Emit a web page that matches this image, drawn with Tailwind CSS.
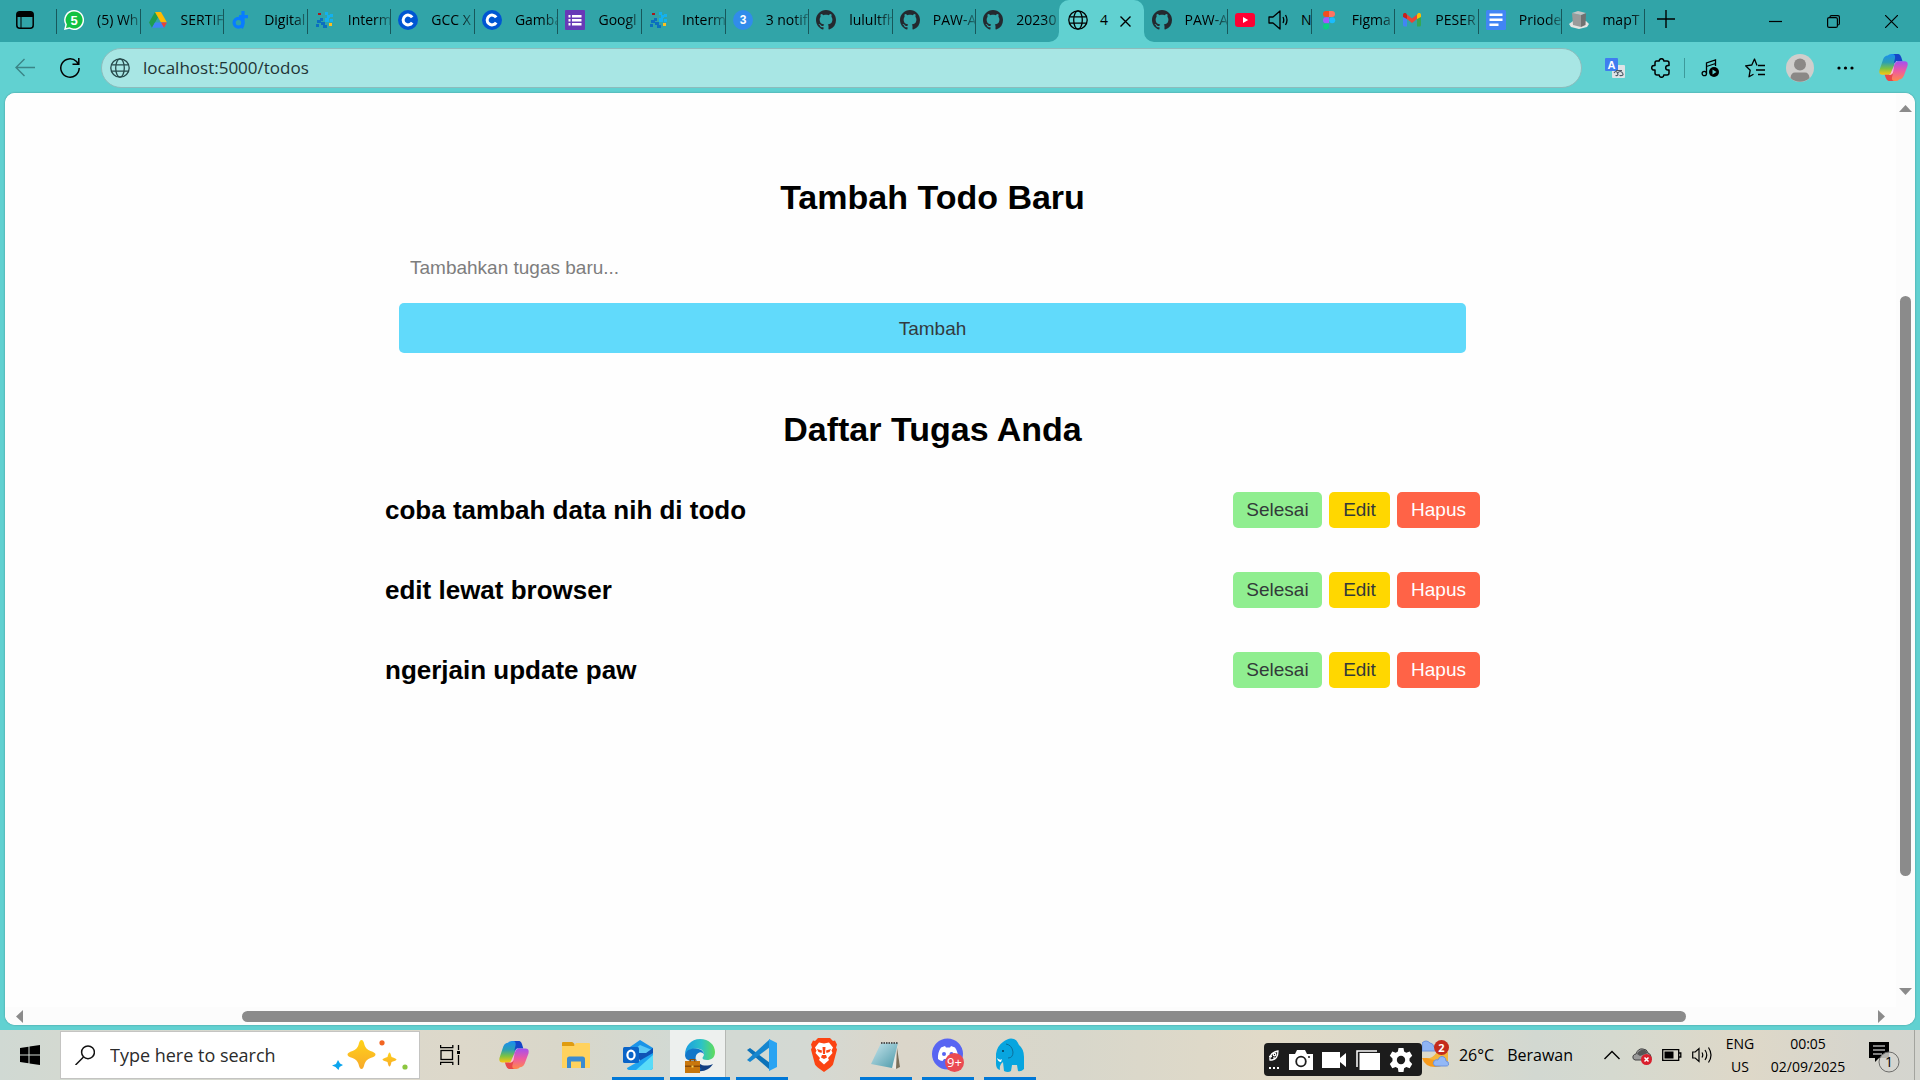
<!DOCTYPE html>
<html lang="id">
<head>
<meta charset="utf-8">
<meta name="viewport" content="width=device-width, initial-scale=1">
<title>Todos</title>
<script src="https://cdn.jsdelivr.net/npm/@tailwindcss/browser@4"></script>
</head>
<body class="flex h-screen flex-col overflow-hidden bg-[#61d1d1] font-['Open_Sans',sans-serif] text-black">

<!-- shared icons -->
<svg class="absolute size-0" aria-hidden="true">
  <defs>
    <linearGradient id="cpA" x1="0" y1="0" x2="0" y2="1"><stop offset="0" stop-color="#1b8df0"/><stop offset=".4" stop-color="#2a9fb5"/><stop offset=".7" stop-color="#7cc243"/><stop offset="1" stop-color="#ffc50f"/></linearGradient>
    <linearGradient id="cpB" x1="0" y1="0" x2="0" y2="1"><stop offset="0" stop-color="#a44ff0"/><stop offset=".5" stop-color="#ee5aa0"/><stop offset="1" stop-color="#ff8a4a"/></linearGradient>
    <linearGradient id="edA" x1="0" y1="0" x2="1" y2="0"><stop offset="0" stop-color="#1b9de2"/><stop offset=".55" stop-color="#2cc3c6"/><stop offset="1" stop-color="#5fdc5a"/></linearGradient>
    <linearGradient id="star" x1="0" y1="0" x2="0" y2="1"><stop offset="0" stop-color="#ffd319"/><stop offset="1" stop-color="#f8a92a"/></linearGradient>
    <linearGradient id="note" x1="0" y1="0" x2="1" y2="1"><stop offset="0" stop-color="#c9e7ee"/><stop offset="1" stop-color="#4b98a8"/></linearGradient>
  </defs>
  <symbol id="github" viewBox="0 0 16 16"><path fill="#24292f" d="M8 0C3.58 0 0 3.58 0 8c0 3.54 2.29 6.53 5.47 7.59.4.07.55-.17.55-.38 0-.19-.01-.82-.01-1.49-2.01.37-2.53-.49-2.69-.94-.09-.23-.48-.94-.82-1.13-.28-.15-.68-.52-.01-.53.63-.01 1.08.58 1.23.82.72 1.21 1.87.87 2.33.66.07-.52.28-.87.51-1.07-1.78-.2-3.64-.89-3.64-3.95 0-.87.31-1.59.82-2.15-.08-.2-.36-1.02.08-2.12 0 0 .67-.21 2.2.82.64-.18 1.32-.27 2-.27s1.36.09 2 .27c1.53-1.04 2.2-.82 2.2-.82.44 1.1.16 1.92.08 2.12.51.56.82 1.27.82 2.15 0 3.07-1.87 3.75-3.65 3.95.29.25.54.73.54 1.48 0 1.07-.01 1.93-.01 2.2 0 .21.15.46.55.38A8.01 8.01 0 0 0 16 8c0-4.42-3.58-8-8-8z"/></symbol>
  <symbol id="coursera" viewBox="0 0 20 20"><circle cx="10" cy="10" r="10" fill="#0056d2"/><path fill="none" stroke="#fff" stroke-width="3" d="M14.2 12.6A4.9 4.9 0 1 1 14.2 7.4"/></symbol>
  <symbol id="dots" viewBox="0 0 20 20"><path fill="#0b6fc0" d="M2 10h4v3H2zM6 12h4v3H6zM1 14h3v3H1zM8 15h4v3H8zM5 8h3v3H5z"/><path fill="#13b1f0" d="M10 2h3v3h-3zM12 5h3v3h-3zM15 4h3v3h-3zM10 8h4v4h-4zM15 9h3v3h-3z"/><path fill="#a9191c" d="M3 3h3v2H3z"/><path fill="#ffc01e" d="M14 13h3v3h-3z"/></symbol>
  <symbol id="globe" viewBox="0 0 20 20"><g fill="none" stroke="currentColor" stroke-width="1.3"><circle cx="10" cy="10" r="9.2"/><ellipse cx="10" cy="10" rx="4.3" ry="9.2"/><path d="M1.6 6.800h16.800M1.600 13.200h16.800"/></g></symbol>
  <symbol id="copilot" viewBox="0 0 28 28"><path fill="url(#cpA)" d="M8.500 2.500Q9.500 1 12 1h7.500L13 19.500Q12.500 21 10.500 21H3.200Q-.5 21 .5 16.500L4 6Q5.500 2.500 8.500 2.500z"/><path fill="#1546c8" d="M13 1h5.500Q20.500 1 21.500 4l1.200 4h-4.200Q15 8 14 11l1.500-6Q16 1 13 1z"/><path fill="url(#cpB)" d="M19.500 25.500Q18.500 27 16 27H8.500L15 10.500Q15.800 8 18 8h6.800q3.700 0 2.700 4.500L24 22q-1.500 3.500-4.500 3.500z"/><path fill="#e8474a" d="M15 27H9.500Q7.500 27 6.500 24l-1-3h4.500Q13 21 14 18l-1.500 5.500Q12 27 15 27z"/><path fill="#fff" fill-opacity=".6" d="M15 10 18 8h-1.500l-5.500 12-1.500 1h2q1.500-.5 2-2z"/></symbol>
</svg>

<!-- tab strip -->
<header class="flex h-[42px] shrink-0 items-stretch bg-[#31a4a8] text-sm leading-5">
  <button aria-label="Tab actions" class="flex w-14 shrink-0 items-center pl-4 pb-[2px]">
    <svg class="size-[18px]" viewBox="0 0 18 18"><rect x=".8" y=".8" width="16.400" height="16.400" rx="3" fill="none" stroke="#000" stroke-width="1.5"/><path d="M1 6V4a3 3 0 0 1 3-3h10a3 3 0 0 1 3 3v2z"/><path stroke="#000" stroke-width="1" d="M5 5v12"/></svg>
  </button>
  <nav class="flex w-[1589px] min-w-0" aria-label="Tabs">
    <a href="#" class="relative flex min-w-0 flex-1 items-center gap-[13px] pb-[2px] pl-2 before:absolute before:left-0 before:top-[9px] before:h-[25px] before:w-px before:bg-[#17585b]">
      <svg class="size-5 shrink-0" viewBox="0 0 20 20"><path fill="#fff" d="M10 0a10 10 0 1 1-4.700 18.800L0 20l1.300-5.200A10 10 0 0 1 10 0z"/><path fill="#12c143" d="M10 1.500a8.500 8.500 0 1 1-4.400 15.700L2 18l.9-3.500A8.500 8.500 0 0 1 10 1.500z"/><text x="10" y="14.800" text-anchor="middle" font-size="13" font-weight="700" fill="#fff" font-family="Liberation Sans">5</text></svg>
      <span class="min-w-0 flex-1 overflow-hidden whitespace-nowrap [mask-image:linear-gradient(to_right,#000_65%,#0004)]">(5) Wh</span></a>
    <a href="#" class="relative flex min-w-0 flex-1 items-center gap-[13px] pb-[2px] pl-2 before:absolute before:left-0 before:top-[9px] before:h-[25px] before:w-px before:bg-[#17585b]">
      <svg class="size-5 shrink-0" viewBox="0 0 20 20"><path fill="#1e9c50" d="M7 2L1 12.500l3 5.300L10 7.300z"/><path fill="#ffba00" d="M7 2h6l6 10.500h-6z"/><path fill="#3f85f4" d="M4 17.800h12l3-5.300H7z"/><path fill="#ea4335" d="M13 12.500h6l-3 5.300z"/></svg>
      <span class="min-w-0 flex-1 overflow-hidden whitespace-nowrap [mask-image:linear-gradient(to_right,#000_65%,#0004)]">SERTIF</span></a>
    <a href="#" class="relative flex min-w-0 flex-1 items-center gap-[13px] pb-[2px] pl-2 before:absolute before:left-0 before:top-[9px] before:h-[25px] before:w-px before:bg-[#17585b]">
      <svg class="size-5 shrink-0" viewBox="0 0 20 20"><g fill="none" stroke="#087cff" stroke-width="3.200"><circle cx="7.500" cy="12.700" r="4.400"/><path d="M12 1v12q0 3-1.500 5M8 6.600h9"/></g></svg>
      <span class="min-w-0 flex-1 overflow-hidden whitespace-nowrap [mask-image:linear-gradient(to_right,#000_65%,#0004)]">Digital</span></a>
    <a href="#" class="relative flex min-w-0 flex-1 items-center gap-[13px] pb-[2px] pl-2 before:absolute before:left-0 before:top-[9px] before:h-[25px] before:w-px before:bg-[#17585b]">
      <svg class="size-5 shrink-0"><use href="#dots"/></svg>
      <span class="min-w-0 flex-1 overflow-hidden whitespace-nowrap [mask-image:linear-gradient(to_right,#000_65%,#0004)]">Interm</span></a>
    <a href="#" class="relative flex min-w-0 flex-1 items-center gap-[13px] pb-[2px] pl-2 before:absolute before:left-0 before:top-[9px] before:h-[25px] before:w-px before:bg-[#17585b]">
      <svg class="size-5 shrink-0"><use href="#coursera"/></svg>
      <span class="min-w-0 flex-1 overflow-hidden whitespace-nowrap [mask-image:linear-gradient(to_right,#000_65%,#0004)]">GCC X</span></a>
    <a href="#" class="relative flex min-w-0 flex-1 items-center gap-[13px] pb-[2px] pl-2 before:absolute before:left-0 before:top-[9px] before:h-[25px] before:w-px before:bg-[#17585b]">
      <svg class="size-5 shrink-0"><use href="#coursera"/></svg>
      <span class="min-w-0 flex-1 overflow-hidden whitespace-nowrap [mask-image:linear-gradient(to_right,#000_65%,#0004)]">Gamba</span></a>
    <a href="#" class="relative flex min-w-0 flex-1 items-center gap-[13px] pb-[2px] pl-2 before:absolute before:left-0 before:top-[9px] before:h-[25px] before:w-px before:bg-[#17585b]">
      <svg class="size-5 shrink-0" viewBox="0 0 20 20"><rect width="20" height="20" rx="1" fill="#673ab7"/><path fill="#fff" d="M3.500 5h2v2.500h-2zM7 5h9.500v2.500H7zM3.500 9h2v2.500h-2zM7 9h9.500v2.500H7zM3.500 13h2v2.500h-2zM7 13h9.500v2.500H7z"/></svg>
      <span class="min-w-0 flex-1 overflow-hidden whitespace-nowrap [mask-image:linear-gradient(to_right,#000_65%,#0004)]">Googl</span></a>
    <a href="#" class="relative flex min-w-0 flex-1 items-center gap-[13px] pb-[2px] pl-2 before:absolute before:left-0 before:top-[9px] before:h-[25px] before:w-px before:bg-[#17585b]">
      <svg class="size-5 shrink-0"><use href="#dots"/></svg>
      <span class="min-w-0 flex-1 overflow-hidden whitespace-nowrap [mask-image:linear-gradient(to_right,#000_65%,#0004)]">Interm</span></a>
    <a href="#" class="relative flex min-w-0 flex-1 items-center gap-[13px] pb-[2px] pl-2 before:absolute before:left-0 before:top-[9px] before:h-[25px] before:w-px before:bg-[#17585b]">
      <svg class="size-5 shrink-0" viewBox="0 0 20 20"><circle cx="10" cy="10" r="10" fill="#318ceb"/><text x="10" y="14" text-anchor="middle" font-size="12" font-weight="700" fill="#fff" font-family="Liberation Sans">3</text></svg>
      <span class="min-w-0 flex-1 overflow-hidden whitespace-nowrap [mask-image:linear-gradient(to_right,#000_65%,#0004)]">3 notif</span></a>
    <a href="#" class="relative flex min-w-0 flex-1 items-center gap-[13px] pb-[2px] pl-2 before:absolute before:left-0 before:top-[9px] before:h-[25px] before:w-px before:bg-[#17585b]">
      <svg class="size-5 shrink-0"><use href="#github"/></svg>
      <span class="min-w-0 flex-1 overflow-hidden whitespace-nowrap [mask-image:linear-gradient(to_right,#000_65%,#0004)]">lulultfh</span></a>
    <a href="#" class="relative flex min-w-0 flex-1 items-center gap-[13px] pb-[2px] pl-2 before:absolute before:left-0 before:top-[9px] before:h-[25px] before:w-px before:bg-[#17585b]">
      <svg class="size-5 shrink-0"><use href="#github"/></svg>
      <span class="min-w-0 flex-1 overflow-hidden whitespace-nowrap [mask-image:linear-gradient(to_right,#000_65%,#0004)]">PAW-A</span></a>
    <a href="#" class="relative flex min-w-0 flex-1 items-center gap-[13px] pb-[2px] pl-2 before:absolute before:left-0 before:top-[9px] before:h-[25px] before:w-px before:bg-[#17585b]">
      <svg class="size-5 shrink-0"><use href="#github"/></svg>
      <span class="min-w-0 flex-1 overflow-hidden whitespace-nowrap [mask-image:linear-gradient(to_right,#000_65%,#0004)]">20230</span></a>
    <a href="#" aria-current="page" class="relative flex min-w-0 flex-1 items-center rounded-t-[10px] bg-[#61d1d1] pb-[2px] pl-[9px]">
      <svg class="absolute -left-2.5 bottom-0 size-2.5" viewBox="0 0 10 10"><path fill="#61d1d1" d="M10 0v10H0A10 10 0 0 0 10 0z"/></svg>
      <svg class="absolute -right-2.5 bottom-0 size-2.5" viewBox="0 0 10 10"><path fill="#61d1d1" d="M0 0v10h10A10 10 0 0 1 0 0z"/></svg>
      <svg class="size-5 shrink-0"><use href="#globe"/></svg>
      <span class="ml-3">4</span>
      <svg class="ml-3 mt-[2px] size-[11px]" viewBox="0 0 11 11"><path stroke="#000" stroke-width="1.400" d="M.5.500l10 10M10.500.500l-10 10"/></svg></a>
    <a href="#" class="relative flex min-w-0 flex-1 items-center gap-[13px] pb-[2px] pl-2">
      <svg class="size-5 shrink-0"><use href="#github"/></svg>
      <span class="min-w-0 flex-1 overflow-hidden whitespace-nowrap [mask-image:linear-gradient(to_right,#000_65%,#0004)]">PAW-A</span></a>
    <a href="#" class="relative flex min-w-0 flex-1 items-center gap-[13px] pb-[2px] pl-2 before:absolute before:left-0 before:top-[9px] before:h-[25px] before:w-px before:bg-[#17585b]">
      <svg class="size-5 shrink-0" viewBox="0 0 20 20"><rect y="3" width="20" height="14" rx="3" fill="#ff0033"/><path fill="#fff" d="M8 7v6l5.200-3z"/></svg>
      <svg class="size-5 shrink-0" viewBox="0 0 20 20"><path fill="none" stroke="#000" stroke-width="1.300" stroke-linejoin="round" d="M1 7v6h4l7 6V1L5 7zM15 7q1.500 3 0 6M17.500 5q3 5 0 10"/></svg>
      <span class="min-w-0 flex-1 whitespace-nowrap">N</span></a>
    <a href="#" class="relative flex min-w-0 flex-1 items-center gap-[13px] pb-[2px] pl-2 before:absolute before:left-0 before:top-[9px] before:h-[25px] before:w-px before:bg-[#17585b]">
      <svg class="size-5 shrink-0" viewBox="0 0 20 20"><path fill="#f24e1e" d="M10 1v6H7a3 3 0 0 1 0-6z"/><path fill="#ff7262" d="M10 1h3a3 3 0 0 1 0 6h-3z"/><path fill="#a259ff" d="M10 7.200v6H7a3 3 0 0 1 0-6z"/><circle cx="13.200" cy="10.200" r="3" fill="#1abcfe"/><path fill="#0acf83" d="M7 13.400h3v3a3 3 0 1 1-3-3z"/></svg>
      <span class="min-w-0 flex-1 overflow-hidden whitespace-nowrap [mask-image:linear-gradient(to_right,#000_65%,#0004)]">Figma</span></a>
    <a href="#" class="relative flex min-w-0 flex-1 items-center gap-[13px] pb-[2px] pl-2 before:absolute before:left-0 before:top-[9px] before:h-[25px] before:w-px before:bg-[#17585b]">
      <svg class="size-5 shrink-0" viewBox="0 0 20 20"><path fill="#4285f4" d="M1 6l4 3v7.500H2.500A1.500 1.500 0 0 1 1 15z"/><path fill="#34a853" d="M19 6l-4 3v7.500h2.500A1.500 1.500 0 0 0 19 15z"/><path fill="#ea4335" d="M5 9V4.500l5 4 5-4V9l-5 4z"/><path fill="#c5221f" d="M1 7V5c0-2 2-2.500 3.200-1.500L5 4.500V9z"/><path fill="#fbbc04" d="M19 7V5c0-2-2-2.500-3.200-1.500l-.8 1V9z"/></svg>
      <span class="min-w-0 flex-1 overflow-hidden whitespace-nowrap [mask-image:linear-gradient(to_right,#000_65%,#0004)]">PESER</span></a>
    <a href="#" class="relative flex min-w-0 flex-1 items-center gap-[13px] pb-[2px] pl-2 before:absolute before:left-0 before:top-[9px] before:h-[25px] before:w-px before:bg-[#17585b]">
      <svg class="size-5 shrink-0" viewBox="0 0 20 20"><rect width="20" height="20" rx="1.500" fill="#4285f4"/><path fill="#fff" d="M3.500 3.500h13V6h-13zM3.500 8.500h13V11h-13zM3.500 13.500h9V16h-9z"/></svg>
      <span class="min-w-0 flex-1 overflow-hidden whitespace-nowrap [mask-image:linear-gradient(to_right,#000_65%,#0004)]">Priode</span></a>
    <a href="#" class="relative flex min-w-0 flex-1 items-center gap-[13px] pb-[2px] pl-2 before:absolute before:left-0 before:top-[9px] before:h-[25px] before:w-px before:bg-[#17585b] after:absolute after:right-0 after:top-[9px] after:h-[25px] after:w-px after:bg-[#17585b]">
      <svg class="size-5 shrink-0" viewBox="0 0 20 20"><path fill="#e4e4e2" d="M0 14l4-3h13l3 3-2 3-8 2-8-2z"/><path fill="#9b9b9b" d="M3 3l9 2v12l-8-2z"/><path fill="#717171" d="M12 5l5-2-.5 12-4.500 2z"/><path fill="#c5c5c5" d="M3 3l6-2 8 2-5 2z"/></svg>
      <span class="min-w-0 flex-1 overflow-hidden whitespace-nowrap [mask-image:linear-gradient(to_right,#000_65%,#0004)]">mapT</span></a>
  </nav>
  <button aria-label="New tab" class="flex w-[42px] shrink-0 items-center justify-center pb-1"><svg class="size-[18px]" viewBox="0 0 18 18"><path stroke="#000" stroke-width="1.400" d="M9 0v18M0 9h18"/></svg></button>
  <div class="ml-auto flex shrink-0">
    <button aria-label="Minimize" class="flex w-[58px] items-center justify-center"><svg class="size-[13px]" viewBox="0 0 13 13"><path stroke="#000" stroke-width="1.200" d="M0 6.500h13"/></svg></button>
    <button aria-label="Restore" class="flex w-[58px] items-center justify-center"><svg class="size-[13px]" viewBox="0 0 13 13"><g fill="none" stroke="#000" stroke-width="1.200"><rect x=".6" y="2.600" width="9.800" height="9.800" rx="1.500"/><path d="M3 2.500V2Q3 .6 4.500.6H11q1.400 0 1.400 1.400v6.500q0 1.500-1.500 1.500"/></g></svg></button>
    <button aria-label="Close" class="flex w-[58px] items-center justify-center"><svg class="size-[13px]" viewBox="0 0 13 13"><path stroke="#000" stroke-width="1.200" d="M0 0l13 13M13 0L0 13"/></svg></button>
  </div>
</header>

<!-- toolbar -->
<div class="flex h-[51px] shrink-0 items-center pr-px">
  <button aria-label="Back" class="flex w-[50px] items-center justify-center"><svg class="size-5" viewBox="0 0 20 20"><path fill="none" stroke="#3b8587" stroke-width="1.400" d="M20 9.500H1M9.500 1L1 9.500 9.500 18"/></svg></button>
  <button aria-label="Refresh" class="flex w-[51px] items-center pl-[10px]"><svg class="size-5" viewBox="0 0 20 20"><path fill="none" stroke="#000" stroke-width="1.500" d="M19.200 10A9.200 9.200 0 1 1 16.500 3.500L18.500 6M18.800 0v6.300h-6.300"/></svg></button>
  <div class="flex h-10 min-w-0 flex-1 items-center rounded-full border border-[#8cbcbc] bg-[#a8e6e4] pl-2">
    <svg class="size-5 shrink-0 text-[#26494a]"><use href="#globe"/></svg>
    <input aria-label="Address" value="localhost:5000/todos" class="ml-[13px] min-w-0 flex-1 bg-transparent text-[17px] leading-6 text-[#1f3536] outline-none">
  </div>
  <div class="ml-[10px] flex shrink-0 items-center">
    <button aria-label="Translate" class="flex w-[45px] justify-center"><svg class="size-5" viewBox="0 0 20 20"><rect x="7" y="7" width="13" height="13" rx="1" fill="#dfe3e6"/><rect width="13" height="13" rx="1" fill="#3f7df0"/><text x="6.500" y="10.500" text-anchor="middle" font-size="11" font-weight="700" fill="#fff" font-family="Liberation Sans">A</text><path fill="none" stroke="#4d5a66" stroke-width="1.200" d="M9 15q2-3 3.500 0t-2 2.500M12.500 15q3-3 5 0t-3 2.500M11 12.500h6"/></svg></button>
    <button aria-label="Extensions" class="flex w-[47px] justify-center"><svg class="size-5" viewBox="0 0 20 20"><path fill="none" stroke="#000" stroke-width="1.500" stroke-linejoin="round" d="M5.500 3H8.200a2.300 2.300 0 0 1 4.600 0H16q2 0 2 2v2.500h-1a2.300 2.300 0 0 0 0 4.600h1V15q0 2-2 2h-3.200a2.300 2.300 0 0 1-4.600 0H6q-2 0-2-2v-2.900H3a2.300 2.300 0 0 1 0-4.600h1V5q0-2 1.500-2z"/></svg></button>
    <span class="h-5 w-px bg-[#3d9a9b]"></span>
    <button aria-label="Media" class="flex w-[50px] justify-center"><svg class="size-[18px]" viewBox="0 0 18 18"><g fill="none" stroke="#000" stroke-width="1.300"><circle cx="3.300" cy="14.500" r="2.200"/><path d="M5.500 14.500V4l9-3v6M5.500 7.500l9-3"/></g><circle cx="13" cy="13" r="5"/><path fill="#61d1d1" d="M11.500 10.500v5l4-2.500z"/></svg></button>
    <button aria-label="Favorites" class="flex w-10 justify-center"><svg class="size-5" viewBox="0 0 20 20"><g fill="none" stroke="#000" stroke-width="1.300"><path stroke-linejoin="round" d="M12 7.500L9.500 1 6.800 7 .6 7.800l4.600 4.400L4 18.800l4.500-2.600"/><path d="M13 7.500h7M11 12h9M13 16.500h7"/></g></svg></button>
    <button aria-label="Profile" class="flex w-[50px] justify-center"><svg class="size-7" viewBox="0 0 28 28"><circle cx="14" cy="14" r="14" fill="#d0cecc"/><circle cx="14" cy="10.500" r="6" fill="#8b8886"/><path fill="#8b8886" d="M4.500 24Q5 18.500 9 18.500h10q4 0 4.500 5.500a14 14 0 0 1-19 0z"/></svg></button>
    <button aria-label="More" class="flex w-10 justify-center"><svg class="h-1 w-[17px]" viewBox="0 0 17 4"><circle cx="2" cy="2" r="1.600"/><circle cx="8.500" cy="2" r="1.600"/><circle cx="15" cy="2" r="1.600"/></svg></button>
    <button aria-label="Copilot" class="flex w-[54px] justify-center pl-[2px]"><svg class="size-[29px]"><use href="#copilot"/></svg></button>
  </div>
</div>

<!-- page -->
<div class="mx-[5px] mb-[5px] flex min-h-0 flex-1 flex-col overflow-hidden rounded-[10px] bg-white shadow-[0_0_2px_#00000055]">
  <div class="flex min-h-0 flex-1">
    <main class="min-w-0 flex-1 overflow-hidden bg-[#fefefe] pr-9 pt-[84px] font-['Liberation_Sans',Arial,sans-serif] text-[19px]">
      <div class="mx-auto w-full max-w-[1095px]">
        <h2 class="text-center text-[34px] font-bold leading-10">Tambah Todo Baru</h2>
        <form class="mx-[14px] mt-[26px] flex flex-col gap-[10px]">
          <input type="text" aria-label="Tugas baru" placeholder="Tambahkan tugas baru..." class="h-[50px] bg-transparent px-[11px] outline-none placeholder:text-[#7d7d7d]">
          <button type="button" class="h-[50px] rounded-[5px] bg-[#61dafb] pt-[2px] text-[#333a40]">Tambah</button>
        </form>
        <h2 class="mt-14 text-center text-[34px] font-bold leading-10">Daftar Tugas Anda</h2>
        <ul class="mt-[21px]">
          <li class="flex h-20 items-center justify-between"><strong class="text-[26px] font-bold leading-8">coba tambah data nih di todo</strong>
            <span class="flex gap-[7px] leading-9"><button class="w-[89px] rounded-[5px] bg-[#90ee90] text-[#333a3a]">Selesai</button><button class="w-[61px] rounded-[5px] bg-[gold] text-[#333a3a]">Edit</button><button class="w-[83px] rounded-[5px] bg-[tomato] text-white">Hapus</button></span></li>
          <li class="flex h-20 items-center justify-between"><strong class="text-[26px] font-bold leading-8">edit lewat browser</strong>
            <span class="flex gap-[7px] leading-9"><button class="w-[89px] rounded-[5px] bg-[#90ee90] text-[#333a3a]">Selesai</button><button class="w-[61px] rounded-[5px] bg-[gold] text-[#333a3a]">Edit</button><button class="w-[83px] rounded-[5px] bg-[tomato] text-white">Hapus</button></span></li>
          <li class="flex h-20 items-center justify-between"><strong class="text-[26px] font-bold leading-8">ngerjain update paw</strong>
            <span class="flex gap-[7px] leading-9"><button class="w-[89px] rounded-[5px] bg-[#90ee90] text-[#333a3a]">Selesai</button><button class="w-[61px] rounded-[5px] bg-[gold] text-[#333a3a]">Edit</button><button class="w-[83px] rounded-[5px] bg-[tomato] text-white">Hapus</button></span></li>
        </ul>
      </div>
    </main>
    <div class="flex w-[19px] shrink-0 flex-col items-center bg-[#fcfcfc] py-3">
      <svg class="h-[7px] w-[13px] shrink-0" viewBox="0 0 13 7"><path fill="#8b8b8b" d="M0 7l6.500-7L13 7z"/></svg>
      <div class="min-h-0 flex-[184]"></div>
      <div class="min-h-0 w-[11px] flex-[580] rounded-full bg-[#8b8b8b]"></div>
      <div class="min-h-0 flex-[112]"></div>
      <svg class="h-[7px] w-[13px] shrink-0" viewBox="0 0 13 7"><path fill="#8b8b8b" d="M0 0l6.500 7L13 0z"/></svg>
    </div>
  </div>
  <div class="flex h-[18px] shrink-0 items-center bg-[#fcfcfc] pl-[11px] pr-[30px]">
    <svg class="h-[13px] w-[7px] shrink-0" viewBox="0 0 7 13"><path fill="#8b8b8b" d="M7 0L0 6.500 7 13z"/></svg>
    <div class="flex-[219]"></div>
    <div class="h-[11px] flex-[1444] rounded-full bg-[#8b8b8b]"></div>
    <div class="flex-[192]"></div>
    <svg class="h-[13px] w-[7px] shrink-0" viewBox="0 0 7 13"><path fill="#8b8b8b" d="M0 0l7 6.500L0 13z"/></svg>
  </div>
</div>

<!-- taskbar -->
<footer class="flex h-[50px] shrink-0 bg-[linear-gradient(to_right,#d0d9d3_0%,#d3d9d1_3%,#ddd8ca_24%,#d9d7ca_29%,#d2d9d3_35%,#d4d9d3_42%,#dbd6ca_47%,#d8d7cb_56%,#e1dac8_66%,#dcd9ca_74%,#d2d8d1_80%,#d5d9cf_84%,#ded8c8_91%,#d6d5cd_97%,#d4d5cf_100%)]">
  <button aria-label="Start" class="flex w-[60px] shrink-0 items-center justify-center"><svg class="size-5" viewBox="0 0 20 20"><path d="M0 3l8.500-1.200v7.700H0zM9.500 1.600L20 0v9.500H9.500zM0 10.500h8.500v7.700L0 17zM9.500 10.500H20V20L9.500 18.400z"/></svg></button>
  <label class="my-px flex w-[360px] shrink items-center border border-[#c4c4c2] bg-white pl-[14px] pr-[11px]">
    <svg class="size-5 shrink-0" viewBox="0 0 20 20"><g fill="none" stroke="#111" stroke-width="1.500"><circle cx="13" cy="7.300" r="6.400"/><path d="M8.500 12L.5 20"/></g></svg>
    <input aria-label="Search" placeholder="Type here to search" class="ml-[15px] min-w-0 flex-1 bg-transparent text-[18px] leading-6 outline-none placeholder:text-[#2b2b2b]">
    <svg class="h-[30px] w-[76px] shrink-0" viewBox="0 0 76 30"><path fill="url(#star)" d="M29.500 0q2 0 3 5 1.500 4.500 6 6 5 1.500 5 3.500t-5 3.500q-4.500 1.500-6 6-1 5-3 5t-3-5q-1.500-4.500-6-6-5-1.500-5-3.500t5-3.500q4.500-1.500 6-6 1-5 3-5z"/><path fill="url(#star)" d="M57.500 12.500q1 0 2 4.500 5 1.500 5 2.500t-5 2.500q-1 4.500-2 4.500t-2-4.500q-5-1.500-5-2.500t5-2.500q1-4.500 2-4.500z"/><path fill="#0ba5ee" d="M6 20l2 3.500 3 1.500-3.500 2L6.500 30l-3-3L0 25.500 4 24z"/><circle cx="50" cy="2.800" r="2.600" fill="#f26522"/><circle cx="73" cy="27" r="2.600" fill="#8cc63f"/></svg>
  </label>
  <button aria-label="Task view" class="flex w-[63px] shrink-0 items-center pl-5"><svg class="size-5" viewBox="0 0 20 20"><g fill="none" stroke="#000" stroke-width="1.300"><rect x="1" y="5.500" width="11.500" height="9"/><path d="M.6 0v2.700h12.200V0M.6 20v-2.700h12.200V20M18.500 0v5M18.500 10v10"/></g><path d="M17 6h3v3h-3z"/></svg></button>
  <nav class="flex shrink-0" aria-label="Apps">
    <button aria-label="Copilot" class="flex w-[62px] items-center justify-center"><svg class="size-[30px]"><use href="#copilot"/></svg></button>
    <button aria-label="File Explorer" class="flex w-[62px] items-center justify-center"><svg class="size-7" viewBox="0 0 28 28"><path fill="#e09c10" d="M0 2q0-1 1-1h9q1 0 2 1.500l1 2.500H0z"/><path fill="#ffd25e" d="M0 5h12l2-3h13q1 0 1 1v24H0z"/><path fill="#3b8bd0" d="M5 27V18q0-2.500 2.500-2.500h13Q23 15.500 23 18v9h-4v-6.500H9V27z"/></svg></button>
    <button aria-label="Outlook" class="relative flex w-[62px] items-center justify-center after:absolute after:inset-x-[5px] after:bottom-0 after:h-[3px] after:bg-[#0078d7]"><svg class="size-[30px]" viewBox="0 0 30 30"><path fill="#1a93e8" d="M4 9L17 0l13 8v10H4z"/><path fill="#5cc8f5" d="M8 12l9-7 12 5-10 12z"/><path fill="#0f52b5" d="M14 13h9l7-5v9l-12 7z"/><path fill="#1fa5f0" d="M4 28q0 2 3 2h20q3 0 3-3V13z"/><path fill="#59dbf8" d="M13 30h14q3 0 3-3V15z"/><rect y="7" width="16" height="16" rx="1.500" fill="#0a64c8"/><ellipse cx="8" cy="15" rx="3.600" ry="4.300" fill="none" stroke="#fff" stroke-width="2.200"/></svg></button>
    <button aria-label="Edge" class="relative flex w-[62px] items-center justify-center before:absolute before:inset-y-0 before:left-px before:w-14 before:border-r before:border-[#b5b8b4] before:bg-[#edf0ee] after:absolute after:bottom-0 after:left-px after:h-[3px] after:w-[60px] after:bg-[#0078d7]"><svg class="relative h-9 w-[30px]" viewBox="0 0 30 36"><path fill="url(#edA)" d="M0 18C0 9 6 2 15 2s15 6 15 13c0 6-4 8-8 8-3 0-4.500-1-4.500-2s1.500-1.500 1.500-4-2.500-5.500-7-5.500C6 11.500 1 15 0 18z"/><path fill="#1277c9" d="M0 18c1-5 6-7 11-6.500 5 .5 8 3 8 6-1-1.500-3-2.500-4.500-2-3.500 1-4.500 4.500-3.500 8H4Q0 22 0 18z"/><path fill="#123f82" d="M11 22c2 6 9 8.500 17 5-3 5-9 8-15 7z"/><path fill="#0d6cc0" d="M11 22q-1 8 6 10l-5 2z"/><path fill="#c9770c" d="M0 24h15v12H0z"/><path fill="#8a4a06" d="M0 28.500h15V30H0zM4.500 22h6v2.500H9V23.300H6v1.200H4.500z"/><path fill="#ffd34d" d="M6.500 28.500h2v2h-2z"/></svg></button>
    <button aria-label="Visual Studio Code" class="relative flex w-[62px] items-center justify-center after:absolute after:inset-x-[5px] after:bottom-0 after:h-[3px] after:bg-[#0078d7]"><svg class="size-8" viewBox="0 0 32 32"><path fill="#0b72b9" d="M1 11l3-2 20 15v7z"/><path fill="#1686cf" d="M1 21l3 2L24 8V0z"/><path fill="#29a3f2" d="M23 0l8 4v24l-8 4z"/></svg></button>
    <button aria-label="Brave" class="flex w-[62px] items-center justify-center"><svg class="h-[34px] w-[26px]" viewBox="0 0 26 34"><path fill="#fb4413" d="M7 0h12l3 3 2-.5 2 4-1 3 1 2-4 15q-1 2-9 7.500-8-5.500-9-7.500L0 11.500l1-2-1-3 2-4 2 .5z"/><path fill="#fff" d="M8 4.500l5 1 5-1 4 5-1.500 3 1 2.500-4.500 5 1 2-5 4.500L8 22l1-2-4.500-5 1-2.500L4 9.500z"/><path fill="#fb4413" d="M6 11l5 1.500-.5 2.500-3-1zM20 11l-5 1.500.5 2.500 3-1zM11 17h4l1 2.500-3 1.500-3-1.500zM11.500 9h3l-.5 7h-2z"/></svg></button>
    <button aria-label="Notepad" class="relative flex w-[62px] items-center justify-center after:absolute after:inset-x-[5px] after:bottom-0 after:h-[3px] after:bg-[#0078d7]"><svg class="size-[30px]" viewBox="0 0 30 30"><path fill="#ece9e3" d="M26 3l3 24-5 2-4-2z"/><path fill="#7c705a" d="M25 29l4-2-3-20z"/><path fill="url(#note)" d="M10 3h17l-6 25L0 24z"/><path stroke="#555" stroke-width="2" stroke-dasharray="1.500 1" d="M10 3h17"/></svg></button>
    <button aria-label="Discord" class="relative flex w-[62px] items-center justify-center after:absolute after:inset-x-[5px] after:bottom-0 after:h-[3px] after:bg-[#0078d7]"><svg class="h-9 w-8" viewBox="0 0 32 36"><circle cx="15.500" cy="17" r="15.500" fill="#5865f2"/><path fill="#fff" d="M9 10.500l4-1.500 1 1.500h4L19 9l4 1.500q3.500 5 3 11.500-2 1.800-4.500 2l-1.500-2h-8L10.500 24Q8 23.800 6 22q-.5-6.500 3-11.500z"/><circle cx="12" cy="17" r="2" fill="#5865f2"/><circle cx="19.500" cy="17" r="2" fill="#5865f2"/><circle cx="22.500" cy="25.500" r="9.500" fill="#ea4b52"/><text x="22.500" y="30" text-anchor="middle" font-size="13" fill="#fff" font-family="Open Sans">9+</text></svg></button>
    <button aria-label="Elephant database" class="relative flex w-[62px] items-center justify-center after:absolute after:inset-x-[5px] after:bottom-0 after:h-[3px] after:bg-[#0078d7]"><svg class="h-[34px] w-7" viewBox="0 0 28 34"><path fill="#08a5df" d="M7 4Q13-1 18 1q3 1 5 6 5 4 5 12v12q-3 3-6 2l-1-6h-5l-1 6q-3 2-7 0l-1-9q-4 3-3 8-4-1-4-6-2-16 7-22z"/><path fill="none" stroke="#0b6f9c" stroke-width="1" d="M10 6q6 1 7 8 0 6-5 6"/><path fill="#fff" d="M1 20q3 3 5 1l-1 3q-3 0-4-4z"/><circle cx="7" cy="13" r="1" fill="#063b55"/></svg></button>
  </nav>
  <div class="ml-auto flex shrink-0 items-center">
    <div class="mt-[13px] flex h-[33px] w-[158px] items-center justify-between self-start rounded bg-[#1c1c1c] pl-1 pr-[9px]">
      <svg class="h-5 w-3" viewBox="0 0 12 20"><g fill="none" stroke="#fff" stroke-width="1.300"><path d="M2 10q-1-7 8-9 0 8-6 9zM1 6.500h3M6 10v-3"/><circle cx="6.500" cy="4.500" r="1.300"/></g><path fill="#fff" d="M1 17h2v2H1zM5 17h2v2H5zM9 17h2v2H9z"/></svg>
      <button aria-label="Screenshot"><svg class="block h-5 w-6" viewBox="0 0 24 20"><path fill="#fff" d="M0 4h6l2-4h8l2 4h6v16H0z"/><circle cx="12" cy="11.500" r="4.800" fill="none" stroke="#1c1c1c" stroke-width="1.800"/><circle cx="20" cy="7" r=".9"/></svg></button>
      <button aria-label="Record"><svg class="block h-5 w-6" viewBox="0 0 24 20"><path fill="#fff" d="M0 2h18v16H0zM18 8l6-5v14l-6-5z"/></svg></button>
      <button aria-label="Windows"><svg class="block h-5 w-6" viewBox="0 0 24 20"><path fill="none" stroke="#fff" stroke-width="1.500" d="M1 17V1h20"/><path fill="#fff" d="M3.500 3H24v17H3.500z"/></svg></button>
      <button aria-label="Settings"><svg class="block size-6" viewBox="0 0 24 24"><path fill="#fff" d="M9.500 0h5l.6 3.500 2.200 1.200 3.400-1.200 2.500 4.300-2.700 2.800v2.500l2.700 2.800-2.500 4.300-3.400-1.200-2.200 1.200-.6 3.800h-5l-.6-3.800-2.200-1.200-3.400 1.200L.8 15.900l2.700-2.800v-2.500L.8 7.800l2.500-4.300 3.400 1.200 2.200-1.200z"/><circle cx="12" cy="12" r="4.200" fill="#1c1c1c"/></svg></button>
    </div>
    <button class="flex h-full items-center text-base"><svg class="mb-[2px] h-7 w-[27px]" viewBox="0 0 27 28"><path fill="#f79a1c" d="M0 18q3 9 13 9 11 0 13-9z"/><path fill="#f4b53c" d="M0 18q9 3 15-6h11v10z"/><path fill="#8fb4f3" stroke="#6c93dc" d="M0 11V3q4-4 8 0 3 0 4 4h3v4z"/><path fill="#93b8f6" stroke="#6c93dc" d="M13 26q-3-2-1-5 2-2 4-1 2-5 6-3 2 1 2 4 3 0 2.500 4-.5 1-2.500 1z"/><circle cx="19.500" cy="7.500" r="7.500" fill="#c42b1c"/><text x="19.500" y="11.500" text-anchor="middle" font-size="11" font-weight="700" fill="#fff" font-family="Open Sans">2</text></svg><span class="ml-[10px]">26°C</span><span class="ml-[13px]">Berawan</span></button>
    <div class="ml-[31px] flex items-center gap-[10px]">
      <svg class="h-[10px] w-4" viewBox="0 0 16 10"><path fill="none" stroke="#000" stroke-width="1.400" d="M.5 9L8 1.500 15.500 9"/></svg>
      <svg class="ml-[2px] mt-[2px] h-[18px] w-5" viewBox="0 0 20 18"><path fill="#9a9a9a" stroke="#444" d="M3 13q-3-1-2-4 1-2 3-2 2-6 7-5 4 0 5 4 3 1 3 4v3z"/><path fill="#555" d="M5 7q3-5 8-4l3 3-8 3z"/><circle cx="14.500" cy="12.500" r="5.500" fill="#d91f2d"/><path stroke="#fff" stroke-width="1.500" d="M12.500 10.500l4 4M16.500 10.500l-4 4"/></svg>
      <svg class="h-3 w-5" viewBox="0 0 20 12"><path fill="none" stroke="#000" stroke-width="1.300" d="M.7.7h16v10.600h-16zM17 4h1.800v4H17"/><path d="M2.500 2.500h9v7h-9z"/></svg>
      <svg class="h-[18px] w-5" viewBox="0 0 20 18"><path fill="none" stroke="#000" stroke-width="1.200" d="M.7 6v6h2.500L7 15.500v-13L3.200 6zM10 6.500q1.500 2.500 0 5M13 4q3.500 5 0 10M16.500 1.500q5 7.500 0 15"/></svg>
    </div>
    <div class="ml-[13px] flex w-[30px] flex-col text-center text-sm leading-[23px]"><span>ENG</span><span>US</span></div>
    <div class="ml-[13px] flex w-20 flex-col text-center text-sm leading-[23px]"><span>00:05</span><span>02/09/2025</span></div>
    <button aria-label="Notifications" class="ml-[21px] mt-[5px]"><svg class="block size-[31px]" viewBox="0 0 31 31"><path d="M0 0h20v16H10l-4 4v-4H0z"/><path stroke="#fff" stroke-width="1.200" d="M4 4h12M4 8h12M4 12h9"/><circle cx="20" cy="20" r="10" fill="#d5d5cf" fill-opacity=".85" stroke="#6d6d6b"/><text x="20" y="25" text-anchor="middle" font-size="14" font-family="Open Sans">1</text></svg></button>
    <span class="ml-[14px] h-full w-1.5 border-l border-[#a3a49e]"></span>
  </div>
</footer>
</body>
</html>
